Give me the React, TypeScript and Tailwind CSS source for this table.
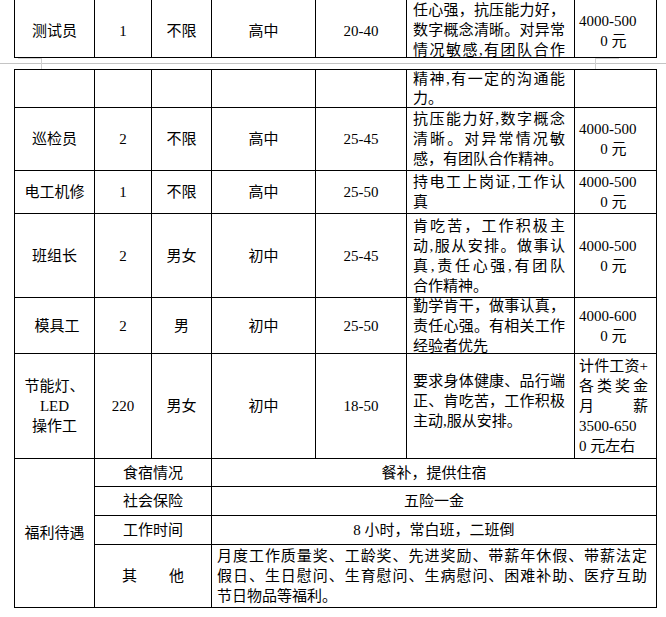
import React from "react";

type Job = {
  name: string[];
  count: string;
  sex: string;
  edu: string;
  age: string;
  desc: string[];
  pay: string[];
  payJustify?: boolean;
  nameClass?: string;
  descClass?: string;
};

const jobs: Job[] = [
  {
    name: ["巡检员"],
    count: "2",
    sex: "不限",
    edu: "高中",
    age: "25-45",
    desc: ["抗压能力好,数字概念", "清晰。对异常情况敏", "感，有团队合作精神。"],
    pay: ["4000-500", "0 元"],
  },
  {
    name: ["电工机修"],
    count: "1",
    sex: "不限",
    edu: "高中",
    age: "25-50",
    desc: ["持电工上岗证,工作认", "真"],
    pay: ["4000-500", "0 元"],
  },
  {
    name: ["班组长"],
    count: "2",
    sex: "男女",
    edu: "初中",
    age: "25-45",
    desc: ["肯吃苦，工作积极主", "动,服从安排。做事认", "真,责任心强,有团队", "合作精神。"],
    pay: ["4000-500", "0 元"],
  },
  {
    name: ["模具工"],
    count: "2",
    sex: "男",
    edu: "初中",
    age: "25-50",
    desc: ["勤学肯干，做事认真，", "责任心强。有相关工作", "经验者优先"],
    pay: ["4000-600", "0 元"],
    nameClass: "pl-[5px]",
  },
  {
    name: ["节能灯、", "LED", "操作工"],
    count: "220",
    sex: "男女",
    edu: "初中",
    age: "18-50",
    desc: ["要求身体健康、品行端", "正、肯吃苦，工作积极", "主动,服从安排。"],
    pay: ["计件工资+", "各类奖金", "月薪", "3500-650", "0 元左右"],
    payJustify: true,
    descClass: "pb-[10px]",
  },
];

// each line is a block; all but the last are stretched to the full width, as Word does
function Lines({ lines, justifyLast = false }: { lines: string[]; justifyLast?: boolean }) {
  return (
    <div className="w-full">
      {lines.map((l, i) => (
        <div key={i} className={i < lines.length - 1 || justifyLast ? "[text-align-last:justify]" : ""}>
          {l}
        </div>
      ))}
    </div>
  );
}

const center = "flex items-center justify-center bg-white text-center";
const descCell = "flex items-center bg-white pl-[6px] pr-[9px]";
const payCell = "flex items-center justify-center bg-white pl-[4px] pr-[8px] text-center";
const label = "col-[2/4] flex items-center justify-center bg-white";
const value = "col-[4/8] flex items-center justify-center bg-white";

export default function App() {
  return (
    <div className="h-[617px] w-[666px] overflow-hidden bg-white font-['Liberation_Serif','Noto_Sans_CJK_SC',serif] text-[15px] leading-[20px] text-black">
      {/* end of the row that sits on the previous page */}
      <div className="ml-[14px] grid w-[643px] grid-cols-[79px_56px_59px_103px_90px_167px_81px] grid-rows-[57px] gap-x-px bg-black px-px pb-px">
        <div className={center + " pt-[5px]"}>测试员</div>
        <div className={center + " pt-[5px]"}>1</div>
        <div className={center + " pt-[5px]"}>不限</div>
        <div className={center + " pt-[5px]"}>高中</div>
        <div className={center + " pt-[5px]"}>20-40</div>
        <div className="flex flex-col justify-end overflow-hidden bg-white pl-[6px] pr-[9px]">
          <div className="translate-y-[3px]">
            <Lines lines={["任心强，抗压能力好，", "数字概念清晰。对异常", "情况敏感,有团队合作"]} justifyLast />
          </div>
        </div>
        <div className={payCell + " pt-[5px]"}>
          <Lines lines={["4000-500", "0 元"]} />
        </div>
      </div>

      {/* page break */}
      <div className="relative h-[11px] pt-[5px]">
        <div className="h-px bg-[#c4c4c4]" />
        <div className="absolute left-[18px] top-0 h-px w-[24px] bg-[#cfcfcf]" />
        <div className="absolute left-[41px] top-0 h-[11px] w-px bg-[#cfcfcf]" />
        <div className="absolute left-[595px] top-0 h-px w-[24px] bg-[#cfcfcf]" />
        <div className="absolute left-[595px] top-0 h-[11px] w-px bg-[#cfcfcf]" />
      </div>

      <div className="ml-[14px] grid w-[643px] grid-cols-[79px_56px_59px_103px_90px_167px_81px] grid-rows-[37px_62px_42px_83px_55px_104px_27px_28px_28px_62px] gap-px bg-black p-px">
        {/* continued row */}
        <div className="bg-white" />
        <div className="bg-white" />
        <div className="bg-white" />
        <div className="bg-white" />
        <div className="bg-white" />
        <div className="bg-white pl-[6px] pr-[9px] leading-[19px]">
          <Lines lines={["精神,有一定的沟通能", "力。"]} />
        </div>
        <div className="bg-white" />

        {jobs.map((j) => (
          <React.Fragment key={j.name.join("")}>
            <div className={center + " " + (j.nameClass ?? "")}>
              <div>
                {j.name.map((n) => (
                  <div key={n}>{n}</div>
                ))}
              </div>
            </div>
            <div className={center}>{j.count}</div>
            <div className={center}>{j.sex}</div>
            <div className={center}>{j.edu}</div>
            <div className={center}>{j.age}</div>
            <div className={descCell + " " + (j.descClass ?? "")}>
              <Lines lines={j.desc} />
            </div>
            {j.payJustify ? (
              <div className="flex items-center bg-white pl-[4px] pr-[8px]">
                <div className="w-full">
                  <div className="[text-align-last:justify]">计件工资+</div>
                  <div className="[text-align-last:justify]">各类奖金</div>
                  <div className="[text-align-last:justify]">月薪</div>
                  <div>3500-650</div>
                  <div>0 元左右</div>
                </div>
              </div>
            ) : (
              <div className={payCell}>
                <Lines lines={j.pay} />
              </div>
            )}
          </React.Fragment>
        ))}

        {/* benefits */}
        <div className="col-[1/2] row-[7/11] flex items-center justify-center bg-white">福利待遇</div>
        <div className={label + " row-[7/8]"}>食宿情况</div>
        <div className={value + " row-[7/8]"}>餐补，提供住宿</div>
        <div className={label + " row-[8/9]"}>社会保险</div>
        <div className={value + " row-[8/9]"}>五险一金</div>
        <div className={label + " row-[9/10]"}>工作时间</div>
        <div className={value + " row-[9/10]"}>8 小时，常白班，二班倒</div>
        <div className={label + " row-[10/11]"}>
          <div className="w-[62px] [text-align-last:justify]">其他</div>
        </div>
        <div className="col-[4/8] row-[10/11] flex items-center bg-white pl-[5px] pr-[9px]">
          <Lines
            lines={[
              "月度工作质量奖、工龄奖、先进奖励、带薪年休假、带薪法定",
              "假日、生日慰问、生育慰问、生病慰问、困难补助、医疗互助",
              "节日物品等福利。",
            ]}
          />
        </div>
      </div>
    </div>
  );
}
